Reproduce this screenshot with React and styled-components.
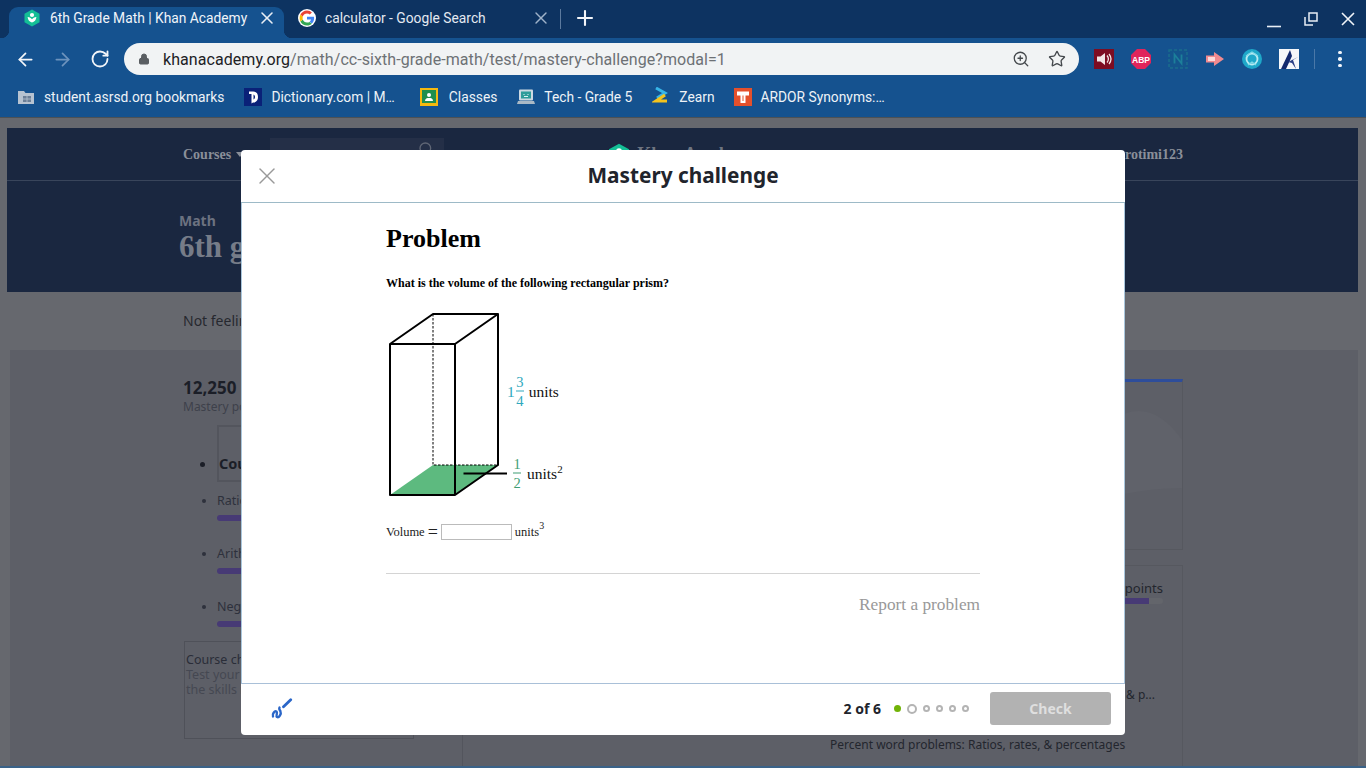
import React from "react";
import styled, { css, createGlobalStyle } from "styled-components";
import { ArrowLeft, ArrowRight, RotateCw, Lock, ZoomIn, Star, Plus, X, Search } from "lucide-react";

const GlobalStyle = createGlobalStyle`
  html, body { margin: 0; padding: 0; height: 100%; overflow: hidden; }
  body { font-family: "Roboto", "Liberation Sans", sans-serif; background: #66686e; }
`;

const Shell = styled.div`
  position: relative;
  width: 1366px;
  height: 768px;
  display: flex;
  flex-direction: column;
  overflow: hidden;
`;

/* browser chrome */
const activeTabFlares = css`
  &::before,
  &::after {
    content: "";
    position: absolute;
    bottom: 0;
    width: 8px;
    height: 8px;
  }

  &::before {
    left: -8px;
    background: radial-gradient(circle at 0 0, transparent 8px, #15528f 8.5px);
  }

  &::after {
    right: -8px;
    background: radial-gradient(circle at 100% 0, transparent 8px, #15528f 8.5px);
  }
`;

const TabStrip = styled.div`
  height: 38px;
  background: #0d3361;
  display: flex;
  align-items: flex-end;
  padding-left: 9px;
  flex: none;
`;

const Tab = styled.div`
  position: relative;
  width: ${(p) => (p.$active ? "275px" : "276px")};
  height: 31px;
  box-sizing: border-box;
  display: flex;
  align-items: center;
  padding: 0 ${(p) => (p.$active ? "7px" : "9px")} 9px 14px;
  gap: 9px;
  font-size: 13.8px;
  color: ${(p) => (p.$active ? "#f0f4f9" : "#e3e9f1")};
  background: ${(p) => (p.$active ? "#15528f" : "transparent")};
  border-radius: 9px 9px 0 0;
  ${(p) => p.$active && activeTabFlares}
`;

const TabTitle = styled.span`
  flex: 1;
  white-space: nowrap;
`;

const TabClose = styled(X)`
  flex: none;
  margin-left: -6px;
`;

const TabDivider = styled.div`
  width: 1px;
  height: 20px;
  background: #5c7a9e;
  align-self: center;
  margin: 0 12px 0 0;
`;

const WindowControls = styled.div`
  margin-left: auto;
  align-self: stretch;
  display: flex;
  align-items: center;
  gap: 23px;
  padding-right: 11px;
`;

const Toolbar = styled.div`
  height: 42px;
  background: #15528f;
  display: flex;
  align-items: center;
  padding-left: 7px;
  flex: none;
`;

const NavIcons = styled.div`
  display: grid;
  grid-template-columns: repeat(3, 37px);
  justify-items: center;
  align-items: center;
  margin-right: 6px;
`;

const Omnibox = styled.div`
  width: 955px;
  height: 32px;
  box-sizing: border-box;
  background: #f1f3f4;
  border-radius: 16px;
  display: flex;
  align-items: center;
  padding: 0 13px 0 14px;
  font-size: 16px;
  color: #202124;
`;

const UrlText = styled.span`
  flex: 1;
  margin-left: 13px;
  letter-spacing: 0.06px;
  white-space: nowrap;

  span { color: #6d7175; }
`;

const OmniIcons = styled.div`
  display: flex;
  align-items: center;
  gap: 18px;
  color: #44484c;
`;

const Extensions = styled.div`
  display: flex;
  align-items: center;
  margin-left: 15px;
  gap: 17px;
`;

const ToolbarRule = styled.div`
  width: 1px;
  height: 20px;
  background: #4a78a8;
  margin-left: -2px;
`;

const MenuDots = styled.div`
  display: flex;
  flex-direction: column;
  gap: 3px;
  margin-left: 23px;

  i { width: 3.5px; height: 3.5px; border-radius: 50%; background: #f3f6fa; display: block; }
`;

const BookmarksBar = styled.div`
  height: 38px;
  box-sizing: border-box;
  background: #15528f;
  border-bottom: 1px solid #4c5156;
  display: flex;
  align-items: center;
  padding: 0 0 3px 18px;
  gap: 20px;
  flex: none;
`;

const Bookmark = styled.div`
  display: flex;
  align-items: center;
  gap: ${(p) => p.$gap || 9}px;
  margin-left: ${(p) => p.$shift || 0}px;
  font-size: 13.8px;
  color: #eef2f7;
  white-space: nowrap;
`;

/* dimmed page behind the dialog */
const Page = styled.div`
  flex: 1;
  display: flex;
  flex-direction: column;
  background: #66686e;
  border-bottom: 2px solid #3a6288;
  min-height: 0;
  overflow: hidden;
`;

const Hero = styled.div`
  margin: 10px 8px 0 7px;
  height: 164px;
  background: #1a2740;
  flex: none;
`;

const SiteNav = styled.div`
  height: 53px;
  box-sizing: border-box;
  border-bottom: 1px solid #39455b;
  display: flex;
  align-items: center;
  padding: 1px 175px 0 176px;
  font-family: "Liberation Serif", serif;
  font-weight: 700;
  font-size: 14px;
  color: #8a8f99;
`;

const Caret = styled.span`
  width: 0;
  height: 0;
  margin-left: 5px;
  border: 4px solid transparent;
  border-top: 5px solid #8a8f99;
  border-bottom: 0;
`;

const SearchBox = styled.div`
  width: 174px;
  height: 34px;
  box-sizing: border-box;
  padding: 3px 10px 0 0;
  background: #242f47;
  margin-left: 26px;
  display: flex;
  justify-content: flex-end;
  color: #5f6675;
`;

const SiteLogo = styled.div`
  display: flex;
  align-items: center;
  gap: 6px;
  margin-left: 163px;
  font-size: 18px;
  color: #6f7580;
`;

const UserName = styled.div`
  margin-left: auto;
  font-size: 14px;
`;

const HeroTitle = styled.div`
  padding: 32px 0 0 172px;
`;

const Subject = styled.div`
  font-family: "Noto Sans", sans-serif;
  font-weight: 700;
  font-size: 14px;
  line-height: 16px;
  color: #6c7280;
`;

const CourseName = styled.div`
  font-family: "Liberation Serif", serif;
  font-weight: 700;
  font-size: 31px;
  line-height: 36px;
  color: #767c88;
`;

const Nudge = styled.div`
  height: 58px;
  padding: 19px 0 0 183px;
  box-sizing: border-box;
  font-family: "Noto Sans", sans-serif;
  font-size: 14px;
  line-height: 20px;
  color: #26282f;
  flex: none;
`;

const Lower = styled.div`
  flex: 1;
  background: #5d5f67;
  display: flex;
  margin: 0 8px 0 10px;
  padding-left: 173px;
  min-height: 0;
`;

const LeftColumn = styled.div`
  width: 280px;
  box-sizing: border-box;
  border-right: 1px solid #53555d;
  padding-top: 27px;
  font-family: "Noto Sans", sans-serif;
  flex: none;
`;

const Points = styled.div`
  font-weight: 700;
  font-size: 17px;
  line-height: 22px;
  color: #1b1e27;
`;

const PointsLabel = styled.div`
  font-size: 12px;
  line-height: 16px;
  color: #3e414b;
`;

const UnitList = styled.ul`
  margin: 10px 0 0;
  padding: 0 0 0 34px;
  list-style: disc;
  color: #1b1e27;
`;

const CurrentUnit = styled.li`
  height: 57px;
  margin-bottom: 11px;
  font-weight: 700;
  font-size: 14.5px;
  line-height: 72px;

  span {
    display: block;
    height: 57px;
    box-sizing: border-box;
    border: 2px solid #53555d;
  }
`;

const UnitItem = styled.li`
  height: 53px;
  font-size: 12.5px;
  line-height: 16px;
  color: #2e313c;
`;

const UnitBar = styled.div`
  width: 180px;
  height: 6px;
  margin-top: 6px;
  border-radius: 3px;
  background: #473a75;
`;

const ChallengeCard = styled.div`
  width: 230px;
  height: 98px;
  box-sizing: border-box;
  border: 1px solid #4f5159;
  margin: -11px 0 0 1px;
  padding: 10px 1px;
  font-size: 12.5px;
  line-height: 15px;
  color: #454852;

  b { display: block; font-weight: 400; color: #2a2d38; }
`;

const RightColumn = styled.div`
  width: 720px;
  margin-right: auto;
  font-family: "Noto Sans", sans-serif;
  font-size: 12px;
  color: #23262e;
`;

const UnitCard = styled.div`
  margin-top: 29px;
  height: 171px;
  box-sizing: border-box;
  border-top: 3px solid #2e4d9a;
  border-right: 1px solid #56585f;
  border-bottom: 1px solid #56585f;
  overflow: hidden;
  display: flex;
  justify-content: flex-end;
`;

const SkillsCard = styled.div`
  margin-top: 15px;
  height: 210px;
  box-sizing: border-box;
  border-top: 1px solid #56585f;
  border-right: 1px solid #56585f;
  display: flex;
  flex-direction: column;
  align-items: flex-end;
  padding: 14px 19px 0 0;
`;

const PointsCaption = styled.div`
  font-size: 13px;
  line-height: 16px;
`;

const PointsBar = styled.div`
  width: 200px;
  height: 6px;
  margin-top: 2px;
  background: #63656b;
  border-radius: 3px;

  i { display: block; width: 186px; height: 6px; background: #473a75; }
`;

const SkillLine = styled.div`
  line-height: 16px;
  margin-top: ${(p) => p.$gap}px;
  white-space: nowrap;
  align-self: ${(p) => (p.$left ? "flex-start" : "flex-end")};
  margin-left: ${(p) => (p.$left ? "367px" : "0")};
  margin-right: ${(p) => (p.$left ? "0" : "8px")};
`;

/* dialog */
const Modal = styled.div`
  position: absolute;
  left: 241px;
  top: 150px;
  width: 884px;
  height: 585px;
  display: flex;
  flex-direction: column;
  background: #fff;
  border-radius: 4px;
  overflow: hidden;
`;

const ModalHeader = styled.div`
  position: relative;
  height: 53px;
  box-sizing: border-box;
  border-bottom: 1px solid #9dbac7;
  display: flex;
  align-items: center;
  justify-content: center;
  flex: none;
`;

const CloseButton = styled.div`
  position: absolute;
  left: 12px;
  top: 12px;
  color: #999;
  line-height: 0;
`;

const ModalTitle = styled.div`
  font-family: "Noto Sans", sans-serif;
  font-weight: 700;
  font-size: 20.8px;
  color: #21242c;
  margin-top: -3px;
`;

const ModalBody = styled.div`
  flex: 1;
  box-sizing: border-box;
  padding: 19px 144px 0;
  border-left: 1px solid #a9c6dc;
  border-right: 1px solid #a9c6dc;
  font-family: "Liberation Serif", serif;
  color: #000;
`;

const ProblemTitle = styled.h2`
  margin: 0;
  font-size: 26px;
  line-height: 34px;
  font-weight: 700;
`;

const Question = styled.p`
  margin: 19px 0 0;
  font-size: 12px;
  line-height: 16px;
  font-weight: 700;
`;

const Figure = styled.div`
  position: relative;
  margin-top: 14px;
  width: 200px;
  height: 205px;

  svg { display: block; }
`;

const FigureLabel = styled.div`
  position: absolute;
  left: ${(p) => p.$x}px;
  top: ${(p) => p.$y}px;
  transform: translateY(-50%);
  display: flex;
  align-items: center;
  font-size: 15.5px;
  color: #111;
  white-space: nowrap;

  sup { font-size: 11px; line-height: 0; position: relative; top: -5px; }
`;

const Whole = styled.span`
  color: ${(p) => p.$color};
  margin-right: 1px;
`;

const Fraction = styled.span`
  display: inline-flex;
  flex-direction: column;
  align-items: center;
  color: ${(p) => p.$color};
  font-size: 14.5px;
  line-height: 18px;
  margin-right: ${(p) => p.$space}px;

  i {
    font-style: normal;
    display: block;
    width: 100%;
    min-width: 8px;
    text-align: center;
  }

  i + i { border-top: 1px solid ${(p) => p.$color}; }
`;

const AnswerRow = styled.div`
  margin-top: 14px;
  height: 16px;
  display: flex;
  align-items: center;
  font-size: 12.5px;
  color: #222;

  sup { font-size: 10px; line-height: 0; position: relative; top: -6px; }
`;

const Equals = styled.span`
  font-size: 18px;
  margin: 0 3px;
  line-height: 16px;
`;

const AnswerInput = styled.div`
  width: 71px;
  height: 16px;
  box-sizing: border-box;
  border: 1px solid #bbb;
  margin-right: 3px;
`;

const Rule = styled.div`
  margin-top: 33px;
  height: 1px;
  background: #d4d4d4;
`;

const ReportLink = styled.div`
  margin-top: 21px;
  text-align: right;
  font-size: 17.3px;
  line-height: 20px;
  color: #999;
`;

const ModalFooter = styled.div`
  height: 52px;
  box-sizing: border-box;
  border-top: 1px solid #a9c0d8;
  display: flex;
  align-items: center;
  padding: 0 14px 2px 28px;
  font-family: "Noto Sans", sans-serif;
  flex: none;
`;

const Progress = styled.div`
  margin-left: auto;
  font-weight: 700;
  font-size: 14px;
  color: #21242c;
`;

const Dots = styled.div`
  display: flex;
  align-items: center;
  gap: 6px;
  margin: 0 21px 0 13px;
`;

const Dot = styled.span`
  box-sizing: border-box;
  width: ${(p) => (p.$current ? "10px" : "7px")};
  height: ${(p) => (p.$current ? "10px" : "7px")};
  border-radius: 50%;
  border: ${(p) => (p.$done ? "none" : "2px solid #b4b4b4")};
  background: ${(p) => (p.$done ? "#71b307" : "transparent")};
`;

const CheckButton = styled.div`
  width: 121px;
  height: 33px;
  border-radius: 3px;
  background: #b2b2b2;
  color: #dfdfdf;
  font-weight: 700;
  font-size: 14px;
  display: flex;
  align-items: center;
  justify-content: center;
`;

/* little drawn icons */
const KhanIcon = ({ size = 18 }) => (
  <svg width={size} height={size} viewBox="0 0 18 18" style={{ flex: "none" }}>
    <path d="M9 .5l7.500 4.200v8.600L9 17.500 1.500 13.300V4.700z" fill="#14bf96" />
    <circle cx="9" cy="6" r="2.100" fill="#fff" />
    <path d="M4.600 8c.2 3 2 5 4.400 5.400C11.400 13 13.200 11 13.400 8c-2 .2-3.600 1-4.400 2.200C8.200 9 6.600 8.200 4.600 8z" fill="#fff" />
  </svg>
);

const GoogleIcon = () => (
  <svg width="18" height="18" viewBox="0 0 48 48" style={{ flex: "none" }}>
    <circle cx="24" cy="24" r="24" fill="#fff" />
    <path d="M43 24.400c0-1.400-.1-2.700-.4-4H24v7.600h10.800c-.5 2.500-1.900 4.600-4 6l6.200 4.800c3.700-3.400 6-8.400 6-14.400z" fill="#4285f4" />
    <path d="M24 44c5.400 0 9.900-1.800 13-4.800l-6.200-4.800c-1.800 1.200-4 1.900-6.800 1.900-5.200 0-9.600-3.500-11.200-8.200l-6.400 5C9.700 39.500 16.300 44 24 44z" fill="#34a853" />
    <path d="M12.800 28.100c-.8-2.500-.8-5.600 0-8.200l-6.400-5c-2.700 5.400-2.700 12.800 0 18.200z" fill="#fbbc05" />
    <path d="M24 11.900c2.900 0 5.400 1 7.500 2.900l5.600-5.600C33.800 6 29.400 4 24 4 16.300 4 9.700 8.500 6.400 14.900l6.400 5c1.600-4.700 6-8 11.200-8z" fill="#ea4335" />
  </svg>
);

const MinimizeIcon = () => (
  <svg width="14" height="14" viewBox="0 0 14 14" style={{ marginTop: 3 }}><path d="M0 12.500h14" stroke="#e8eef5" strokeWidth="1.600" /></svg>
);

const RestoreIcon = () => (
  <svg width="14" height="14" viewBox="0 0 14 14" fill="none" stroke="#e8eef5" strokeWidth="1.500">
    <rect x="5" y="1" width="8" height="8" />
    <path d="M1 5v8h8" />
  </svg>
);

const CloseWindowIcon = () => (
  <svg width="14" height="14" viewBox="0 0 14 14"><path d="M1 1l12 12M13 1L1 13" stroke="#f0f4f9" strokeWidth="1.600" /></svg>
);

const SoundExtension = () => (
  <svg width="20" height="20" viewBox="0 0 20 20">
    <rect width="20" height="20" fill="#7d0d22" />
    <path d="M3 7.500h3.500L11 4v12l-4.500-3.500H3z" fill="#f2e6e6" />
    <path d="M13 6.500c1.600 2 1.600 5 0 7M15 5c2.400 3 2.400 7 0 10" stroke="#f2e6e6" strokeWidth="1.300" fill="none" />
  </svg>
);

const AbpExtension = () => (
  <svg width="20" height="20" viewBox="0 0 20 20">
    <path d="M6 0h8l6 6v8l-6 6H6l-6-6V6z" fill="#e0245b" />
    <text x="10" y="13.500" textAnchor="middle" fontFamily="Liberation Sans" fontWeight="700" fontSize="8.500" fill="#fff">ABP</text>
  </svg>
);

const NExtension = () => (
  <svg width="20" height="20" viewBox="0 0 20 20">
    <rect x="1" y="1" width="18" height="18" fill="#14558c" stroke="#1a6d8d" strokeWidth="1.500" strokeDasharray="3 2" />
    <path d="M6.500 14.500v-9l7 9v-9" fill="none" stroke="#1c7f9a" strokeWidth="1.800" />
  </svg>
);

const PlayExtension = () => (
  <svg width="20" height="20" viewBox="0 0 20 20">
    <path d="M1 6.500h8V3l10 7-10 7v-3.500H1z" fill="#f08a8f" />
    <rect x="3" y="8" width="7" height="4" fill="#fbd9d9" />
  </svg>
);

const CircleExtension = () => (
  <svg width="20" height="20" viewBox="0 0 20 20">
    <circle cx="10" cy="10" r="10" fill="#1fa8c9" />
    <circle cx="10" cy="10" r="5.500" fill="none" stroke="#bcecf3" strokeWidth="1.800" />
    <path d="M4 7l6-4 6 4M6 16l4-3 4 3" fill="none" stroke="#7fd9e8" strokeWidth="1.200" />
  </svg>
);

const ArrowExtension = () => (
  <svg width="20" height="20" viewBox="0 0 20 20">
    <rect width="20" height="20" fill="#f6f7fa" />
    <path d="M2 20L11 1l2 6-6 13z" fill="#13296e" />
    <path d="M9 13l10-5-5 3 3 9-4-6z" fill="#2b3f86" />
  </svg>
);

const FolderIcon = () => (
  <svg width="16" height="16" viewBox="0 0 16 16">
    <path d="M0 2h6l1.500 2H16v11H0z" fill="#b7c3d1" />
    <rect x="5" y="7" width="8" height="6" fill="#6b7f97" />
    <path d="M9 7v6M5 10h8" stroke="#b7c3d1" strokeWidth=".8" />
  </svg>
);

const DictionaryIcon = () => (
  <svg width="18" height="18" viewBox="0 0 18 18">
    <rect width="18" height="18" fill="#0a2178" />
    <path d="M5 3.500h4c3.500 0 5 2.500 5 5.500s-1.500 5.500-5 5.500l-1.500 1V6H5z" fill="#fff" />
    <path d="M9.500 6.500c1 .5 1.500 1.500 1.500 2.500s-.5 2-1.500 2.500z" fill="#0a2178" />
  </svg>
);

const ClassroomIcon = () => (
  <svg width="18" height="18" viewBox="0 0 18 18">
    <rect width="18" height="18" fill="#f5b90f" />
    <rect x="2" y="2" width="14" height="13" fill="#1f8f4e" />
    <circle cx="9" cy="7" r="2" fill="#fff" />
    <path d="M5 13c0-2.500 2-3 4-3s4 .5 4 3z" fill="#fff" />
  </svg>
);

const MonitorIcon = () => (
  <svg width="18" height="18" viewBox="0 0 18 18">
    <rect x="2" y="1.500" width="14" height="11" rx="1" fill="#cdd9e2" />
    <rect x="4" y="3.500" width="10" height="7" fill="#2f9c9a" />
    <path d="M1 13h16l1 3H0z" fill="#aab9c5" />
    <path d="M6.500 6.500h1M10.500 6.500h1M7 8.500h4" stroke="#dff3f1" strokeWidth="1" />
  </svg>
);

const ZearnIcon = () => (
  <svg width="18" height="20" viewBox="0 0 18 20">
    <path d="M4 1l9 5-8 5" fill="none" stroke="#37b6e9" strokeWidth="3" />
    <path d="M13 8L4 14h11" fill="none" stroke="#f4c31d" strokeWidth="3.200" />
  </svg>
);

const ArdorIcon = () => (
  <svg width="18" height="18" viewBox="0 0 18 18">
    <rect width="18" height="18" fill="#e4502c" />
    <path d="M3 3.500h12v4h-3.500V15h-5V7.500H3z" fill="#fff" />
    <path d="M8.500 7.500h1V13h-1z" fill="#e4502c" />
  </svg>
);

const Scribble = () => (
  <svg width="24" height="22" viewBox="0 0 24 22" fill="none" stroke="#2a66c8" strokeLinecap="round" strokeLinejoin="round">
    <path d="M4 18.500C3 16 5.500 12.500 7.500 13.500 9 14.500 6.500 18 8 19 10 20 12.500 16 11.500 13.500 11 12 9.500 11.500 10.500 9.500" strokeWidth="2.400" />
    <path d="M14.500 8.700L21.700 1.800" strokeWidth="2.800" />
  </svg>
);

const CardSwoosh = () => (
  <svg width="58" height="150" viewBox="0 0 58 150" fill="#60626a" stroke="none" style={{ flex: "none" }}>
    <path d="M0 32c20-8 40 0 58 26v48c-20 0-38 2-58 6z" />
  </svg>
);

const Prism = () => (
  <svg width="200" height="205" viewBox="0 0 200 205" fill="none" stroke="#000" strokeLinejoin="round">
    <path d="M4 190h65l43-30H47z" fill="#5dba7f" stroke="none" />
    <path d="M47 9v151h65" strokeWidth="1" strokeDasharray="2.500 1.500" />
    <path d="M4 39h65v151H4zM4 39L47 9h65L69 39M112 9v151L69 190" strokeWidth="2" />
    <path d="M77.500 168.500H121" strokeWidth="2" />
  </svg>
);

const App = () => {
  return (
    <Shell>
      <GlobalStyle />
      <TabStrip>
        <Tab $active>
          <KhanIcon />
          <TabTitle>6th Grade Math | Khan Academy</TabTitle>
          <TabClose size={20} strokeWidth={1.9} color="#e8eef5" />
        </Tab>
        <Tab>
          <GoogleIcon />
          <TabTitle>calculator - Google Search</TabTitle>
          <TabClose size={20} strokeWidth={1.7} color="#9fb2c9" />
        </Tab>
        <TabDivider />
        <Plus size={24} strokeWidth={2.1} color="#f2f5f9" style={{ alignSelf: "center", marginTop: -2 }} />
        <WindowControls>
          <MinimizeIcon />
          <RestoreIcon />
          <CloseWindowIcon />
        </WindowControls>
      </TabStrip>
      <Toolbar>
        <NavIcons>
          <ArrowLeft size={21} strokeWidth={2} color="#f2f5f9" />
          <ArrowRight size={21} strokeWidth={2} color="#6d93bd" />
          <RotateCw size={20} color="#f2f5f9" strokeWidth={2.2} />
        </NavIcons>
        <Omnibox>
          <Lock size={12} color="#5a5e62" fill="#5a5e62" />
          <UrlText>
            khanacademy.org<span>/math/cc-sixth-grade-math/test/mastery-challenge?modal=1</span>
          </UrlText>
          <OmniIcons>
            <ZoomIn size={18} strokeWidth={1.7} />
            <Star size={18} strokeWidth={1.8} />
          </OmniIcons>
        </Omnibox>
        <Extensions>
          <SoundExtension />
          <AbpExtension />
          <NExtension />
          <PlayExtension />
          <CircleExtension />
          <ArrowExtension />
          <ToolbarRule />
        </Extensions>
        <MenuDots><i /><i /><i /></MenuDots>
      </Toolbar>
      <BookmarksBar>
        <Bookmark $gap={10}><FolderIcon />student.asrsd.org bookmarks</Bookmark>
        <Bookmark><DictionaryIcon />Dictionary.com | M…</Bookmark>
        <Bookmark $shift={5} $gap={11}><ClassroomIcon />Classes</Bookmark>
        <Bookmark><MonitorIcon />Tech - Grade 5</Bookmark>
        <Bookmark><ZearnIcon />Zearn</Bookmark>
        <Bookmark $shift={-1}><ArdorIcon />ARDOR Synonyms:…</Bookmark>
      </BookmarksBar>

      <Page>
        <Hero>
          <SiteNav>
            Courses
            <Caret />
            <SearchBox><Search size={16} /></SearchBox>
            <SiteLogo><KhanIcon size={24} />Khan Academy</SiteLogo>
            <UserName>rotimi123</UserName>
          </SiteNav>
          <HeroTitle>
            <Subject>Math</Subject>
            <CourseName>6th grade math</CourseName>
          </HeroTitle>
        </Hero>
        <Nudge>Not feeling ready? Try a practice test first.</Nudge>
        <Lower>
          <LeftColumn>
            <Points>12,250</Points>
            <PointsLabel>Mastery points available</PointsLabel>
            <UnitList>
              <CurrentUnit><span>Course challenge</span></CurrentUnit>
              <UnitItem>Ratios, rates, &amp; percentages<UnitBar /></UnitItem>
              <UnitItem>Arithmetic operations<UnitBar /></UnitItem>
              <UnitItem>Negative numbers<UnitBar /></UnitItem>
            </UnitList>
            <ChallengeCard>
              <b>Course challenge</b>
              Test your knowledge of<br />the skills in this course.
            </ChallengeCard>
          </LeftColumn>
          <RightColumn>
            <UnitCard><CardSwoosh /></UnitCard>
            <SkillsCard>
              <PointsCaption>points</PointsCaption>
              <PointsBar><i /></PointsBar>
              <SkillLine $gap={83}>&amp; p...</SkillLine>
              <SkillLine $gap={34} $left>Percent word problems: Ratios, rates, &amp; percentages</SkillLine>
            </SkillsCard>
          </RightColumn>
        </Lower>
      </Page>

      <Modal>
        <ModalHeader>
          <CloseButton><X size={28} strokeWidth={1.2} /></CloseButton>
          <ModalTitle>Mastery challenge</ModalTitle>
        </ModalHeader>
        <ModalBody>
          <ProblemTitle>Problem</ProblemTitle>
          <Question>What is the volume of the following rectangular prism?</Question>
          <Figure>
            <Prism />
            <FigureLabel $x={121} $y={86}>
              <Whole $color="#2fa8bd">1</Whole>
              <Fraction $color="#2fa8bd" $space={5}><i>3</i><i>4</i></Fraction>
              units
            </FigureLabel>
            <FigureLabel $x={127} $y={168}>
              <Fraction $color="#3f9e74" $space={6}><i>1</i><i>2</i></Fraction>
              units<sup>2</sup>
            </FigureLabel>
          </Figure>
          <AnswerRow>
            Volume <Equals>=</Equals>
            <AnswerInput />
            units<sup>3</sup>
          </AnswerRow>
          <Rule />
          <ReportLink>Report a problem</ReportLink>
        </ModalBody>
        <ModalFooter>
          <Scribble />
          <Progress>2 of 6</Progress>
          <Dots>
            <Dot $done />
            <Dot $current />
            <Dot />
            <Dot />
            <Dot />
            <Dot />
          </Dots>
          <CheckButton>Check</CheckButton>
        </ModalFooter>
      </Modal>
    </Shell>
  );
};

export default App;
